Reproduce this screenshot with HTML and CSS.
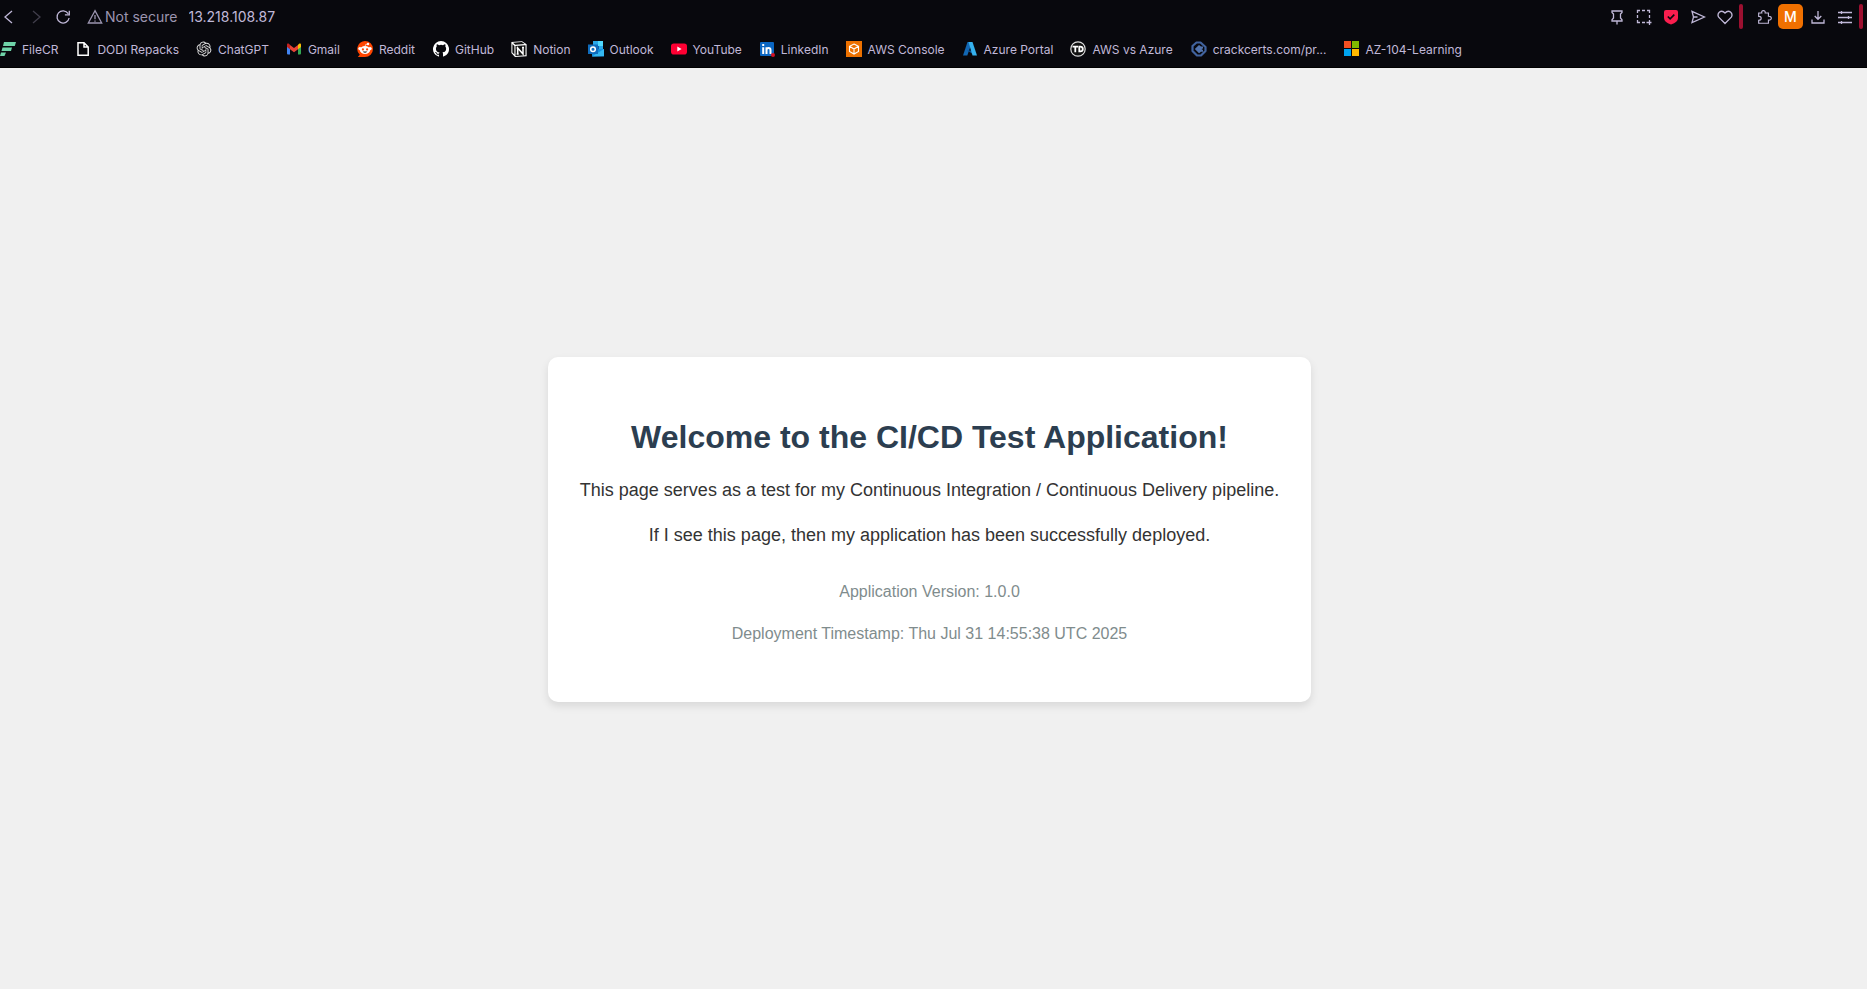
FILE: index.html
```html
<!DOCTYPE html>
<html lang="en">
<head>
<meta charset="utf-8">
<title>CI/CD Test Application</title>
<link rel="stylesheet" href="styles.css">
</head>
<body>
<header class="browser">
  <div class="toolbar">
    <nav class="history" aria-label="History">
      <button class="tool" aria-label="Back"><svg class="glyph" viewBox="0 0 16 16"><path d="M11 2 4 8l7 6"/></svg></button>
      <button class="tool dim" aria-label="Forward"><svg class="glyph" viewBox="0 0 16 16"><path d="m5 2 7 6-7 6"/></svg></button>
      <button class="tool" aria-label="Reload"><svg class="glyph" viewBox="0 0 16 16"><path d="M13.2 4.6A6.1 6.1 0 1 0 14.1 9M14.3 1.7v4.2h-4.4"/></svg></button>
    </nav>
    <button class="security"><svg class="glyph" viewBox="0 0 16 16"><path d="M8 1.7 1.3 14h13.4zM8 6v4.3M8 11.4v1.3"/></svg>Not secure</button>
    <input class="address" aria-label="Address" value="13.218.108.87">
    <div class="actions">
      <button class="tool" aria-label="Pin"><svg class="glyph" viewBox="0 0 16 16"><path d="M3 2h10v1.5L11.5 5v4l1.5 1.700V12H3v-1.300L4.500 9V5L3 3.500zM8 12v3.500"/></svg></button>
      <button class="tool" aria-label="Snapshot"><svg class="glyph" viewBox="0 0 16 16"><path d="M1.500 4V1.500H4M6 1.500h3M11 1.500h2.500V4M13.500 6v3M1.500 6v3M1.500 11v2.500H4M6 13.500h3M10.500 13.500h5M13.500 11v5"/></svg></button>
      <button class="tool" aria-label="Ad blocker"><svg class="glyph" viewBox="0 0 16 16"><path fill="#fa1e4e" stroke="none" d="M1 3q0-2 2-2h10q2 0 2 2v6q0 4-7 6.500Q1 13 1 9z"/><path stroke="#08080d" stroke-width="1.600" d="m4.800 7.500 2.300 2.300 4.200-4.200"/></svg></button>
      <button class="tool" aria-label="Send"><svg class="glyph" viewBox="0 0 16 16"><path d="m2 2.300 12.500 5.700L2 13.700l1.500-5.700zM3.500 8h4"/></svg></button>
      <button class="tool" aria-label="Favorites"><svg class="glyph" viewBox="0 0 16 16"><path d="M8 14.500 1.700 8.200C-.5 4.500 4-.3 8 4c4-4.300 8.500.5 6.300 4.200z"/></svg></button>
    </div>
    <span class="divider"></span>
    <div class="actions extensions">
      <button class="tool" aria-label="Extensions"><svg class="glyph" viewBox="0 0 18 16"><path d="M3 3.500h3.500C5.500-.3 11 0 10.300 3.500H14v3.700c4.300-.5 4.300 4.800 0 4.300V15H3v-3.300c4-.2 3.600-4.500 0-4.400z"/></svg></button>
      <button class="profile" aria-label="Profile M">M</button>
      <button class="tool" aria-label="Downloads"><svg class="glyph" viewBox="0 0 16 16"><path d="M8 2v8M4.700 7 8 10.300 11.300 7M2 10.500V14h12v-3.500"/></svg></button>
      <button class="tool" aria-label="Easy setup"><svg class="glyph" viewBox="0 0 16 16"><path d="M1 3.500h14M1 8.500h14M1 13.500h14M4.500 2v3M11.500 7v3M4.500 12v3"/></svg></button>
    </div>
    <span class="divider"></span>
  </div>
  <nav class="bookmarks" aria-label="Bookmarks">
    <a class="bookmark" href="#"><svg class="favicon" viewBox="0 0 16 16"><path fill="#6fd3a8" d="M4 1h12l-1.200 4H3zM2.500 6.500H12L11 10H1.500zM1 11.500h5L4.500 15H0z"/></svg>FileCR</a>
    <a class="bookmark" href="#"><svg class="favicon" viewBox="0 0 16 16"><path fill="none" stroke="#fff" stroke-width="1.500" d="M3 1.800h6l4.200 4.200v8.200H3zM9 2v4h4"/></svg>DODI Repacks</a>
    <a class="bookmark" href="#"><svg class="favicon" viewBox="-1 -1 26 26"><path fill="#ddd" d="M22.282 9.821a5.985 5.985 0 0 0-.516-4.910 6.046 6.046 0 0 0-6.510-2.900A6.065 6.065 0 0 0 4.981 4.182a5.985 5.985 0 0 0-3.998 2.900 6.046 6.046 0 0 0 .743 7.097 5.980 5.980 0 0 0 .510 4.911 6.051 6.051 0 0 0 6.515 2.900A5.985 5.985 0 0 0 13.260 24a6.056 6.056 0 0 0 5.772-4.206 5.990 5.990 0 0 0 3.998-2.900 6.056 6.056 0 0 0-.748-7.073zM13.260 22.430a4.476 4.476 0 0 1-2.876-1.041l.141-.080 4.779-2.758a.795.795 0 0 0 .393-.682v-6.737l2.020 1.169a.071.071 0 0 1 .038.052v5.583a4.504 4.504 0 0 1-4.495 4.494zM3.600 18.304a4.471 4.471 0 0 1-.535-3.014l.142.085 4.783 2.759a.771.771 0 0 0 .780 0l5.843-3.369v2.332a.080.080 0 0 1-.033.062L9.740 19.950a4.499 4.499 0 0 1-6.140-1.646zM2.341 7.896a4.485 4.485 0 0 1 2.366-1.973V11.600a.766.766 0 0 0 .388.677l5.814 3.354-2.020 1.169a.076.076 0 0 1-.071 0l-4.830-2.787A4.504 4.504 0 0 1 2.341 7.896zm16.596 3.855-5.833-3.387L15.119 7.200a.076.076 0 0 1 .071 0l4.830 2.791a4.494 4.494 0 0 1-.676 8.105v-5.678a.790.790 0 0 0-.407-.667zm2.010-3.023-.141-.085-4.774-2.782a.776.776 0 0 0-.785 0L9.409 9.230V6.897a.066.066 0 0 1 .028-.061l4.830-2.787a4.499 4.499 0 0 1 6.680 4.660zM8.307 12.863l-2.020-1.164a.080.080 0 0 1-.038-.057V6.075a4.499 4.499 0 0 1 7.376-3.454l-.142.081L8.704 5.460a.795.795 0 0 0-.393.681zm1.097-2.366 2.602-1.500 2.607 1.500v2.999l-2.597 1.500-2.607-1.500z"/></svg>ChatGPT</a>
    <a class="bookmark" href="#"><svg class="favicon" viewBox="0 0 16 16"><path fill="#4285f4" d="M1 4v8.500q0 1 1 1h2V7z"/><path fill="#34a853" d="M15 4v8.500q0 1-1 1h-2V7z"/><path fill="#ea4335" d="M4 4v4.200l4 3 4-3V4L8 7z"/><path fill="#c5221f" d="M1 4c0-1.800 1.500-2 3 0v4.200L1 6z"/><path fill="#fbbc04" d="M15 4c0-1.800-1.500-2-3 0v4.200L15 6z"/></svg>Gmail</a>
    <a class="bookmark" href="#"><svg class="favicon" viewBox="0 0 16 16"><path fill="#ff4500" d="M8 0a8 8 0 1 1 0 16H.8l2-2.200A8 8 0 0 1 8 0z"/><circle cx="2.900" cy="7.600" r="1.600" fill="#fff"/><circle cx="13.100" cy="7.600" r="1.600" fill="#fff"/><circle cx="11" cy="3" r="1.200" fill="#fff"/><path fill="none" stroke="#fff" stroke-width=".7" d="M8 5.500q0-2.600 2.500-2.500"/><ellipse cx="8" cy="9" rx="5.200" ry="4" fill="#fff"/><circle cx="5.900" cy="8.400" r="1.100" fill="#ff4500"/><circle cx="10.100" cy="8.400" r="1.100" fill="#ff4500"/><path fill="#222" d="M5.700 10.500h4.600Q8 13 5.700 10.500z"/></svg>Reddit</a>
    <a class="bookmark wide" href="#"><svg class="favicon" viewBox="0 0 16 16"><path fill="#fff" d="M8 0a8 8 0 0 0-2.530 15.590c.4.070.55-.17.55-.38v-1.490c-2.010.37-2.530-.49-2.690-.94-.09-.23-.48-.94-.82-1.130-.28-.15-.68-.52-.01-.53.63-.01 1.080.58 1.230.82.72 1.210 1.870.87 2.330.66.070-.52.280-.87.510-1.070-1.780-.2-3.640-.89-3.640-3.950 0-.87.310-1.590.820-2.150-.080-.2-.360-1.020.080-2.120 0 0 .670-.21 2.200.82a7.600 7.600 0 0 1 4 0c1.530-1.040 2.200-.82 2.200-.82.440 1.100.160 1.920.080 2.120.510.560.820 1.270.820 2.150 0 3.070-1.870 3.750-3.650 3.950.290.250.540.730.540 1.480v2.200c0 .210.150.460.550.380A8 8 0 0 0 8 0z"/></svg>GitHub</a>
    <a class="bookmark" href="#"><svg class="favicon" viewBox="0 0 16 16"><path fill="#fff" d="M.4 1 11 .2l4.600 3v12.100L4 16 .4 12z"/><path fill="#111" d="m2 1.700 8.800-.6 2.800 2L4.300 3.700zM1.400 3l2 2v8.500l-2-2zM4.500 5l10-.7v10L4.500 15z"/><path fill="none" stroke="#fff" stroke-width="1.500" d="M6.700 13V7l5.300 6V6.500M5.700 7h1.500M11 6.500h2M5.700 13h2"/></svg>Notion</a>
    <a class="bookmark" href="#"><svg class="favicon" viewBox="0 0 16 16"><path fill="#28a8ea" d="M5 0h10v9H5z"/><path fill="#50d9ff" d="M10 0h5v5h-5z"/><path fill="#0f5ea8" d="M5 5h6v5H5z"/><path fill="#1490df" d="M4 8.500 16 8v7.500H4z"/><path fill="#35b8f1" d="M16 8v7L4 15.500z"/><path fill="#0f6cbd" d="M0 3.500h10v9.500H0z"/><circle cx="5" cy="8.200" r="2.300" fill="none" stroke="#fff" stroke-width="1.500"/></svg>Outlook</a>
    <a class="bookmark" href="#"><svg class="favicon" viewBox="0 0 16 16"><rect y="2.500" width="16" height="11" rx="2.800" fill="#ff0033"/><path fill="#fff" d="m6.300 5.500 4.300 2.500-4.300 2.500z"/></svg>YouTube</a>
    <a class="bookmark" href="#"><svg class="favicon" viewBox="0 0 16 16"><rect x="1" y="1" width="14" height="14" rx="1" fill="#0a66c2"/><path fill="none" stroke="#fff" stroke-width="2" d="M4.200 6.300V13M4.200 3v2M7.500 6.300V13M7.500 9q0-2 2-2t2 2v4"/><circle cx="14" cy="14" r="2" fill="#d11124"/></svg>LinkedIn</a>
    <a class="bookmark" href="#"><svg class="favicon" viewBox="0 0 16 16"><path fill="#ed7100" d="M0 0h16v16H0z"/><path fill="none" stroke="#fff" stroke-width="1.100" d="m8 3 4.500 2.300v5.200L8 13l-4.500-2.500V5.300zM3.500 5.300 8 8l4.500-2.700M8 8v5"/></svg>AWS Console</a>
    <a class="bookmark" href="#"><svg class="favicon" viewBox="0 0 16 16"><path fill="#1267b4" d="M5.500 1H10L5.300 14.500H1z"/><path fill="#0a4f91" d="M5 9.500h6.500l1 4.500z"/><path fill="#35b1ee" d="M6.500 1h4L15 14.500h-4.500z"/></svg>Azure Portal</a>
    <a class="bookmark" href="#"><svg class="favicon" viewBox="0 0 16 16"><circle cx="8" cy="8" r="7.200" fill="#111" stroke="#ddd" stroke-width="1.200"/><path fill="none" stroke="#fff" stroke-width="1.800" d="M2.500 5.600h5.500M5.300 5.600V11.300M9.300 5.600V10.400h1q2.500 0 2.500-2.400T10.300 5.600z"/></svg>AWS vs Azure</a>
    <a class="bookmark wide" href="#"><svg class="favicon" viewBox="0 0 16 16"><path fill="none" stroke="#41639f" stroke-width="2.200" stroke-linejoin="round" d="M5.500 1.500h4L14.500 6v4L10 14.500H6L1.500 10V5z"/><path fill="#5274ae" d="m8 4 2 1.500h2v2L10.500 8l1.500 1v1.700h-2L8 12.300 3.800 8z"/></svg>crackcerts.com/pr...</a>
    <a class="bookmark" href="#"><svg class="favicon" viewBox="0 0 16 16"><path fill="#f25022" d="M0 0h7v7H0z"/><path fill="#7fba00" d="M8 0h7v7H8z"/><path fill="#00a4ef" d="M0 8h7v7H0z"/><path fill="#ffb900" d="M8 8h7v7H8z"/></svg>AZ-104-Learning</a>
  </nav>
</header>
<main class="page">
  <section class="card">
    <h1 class="title">Welcome to the CI/CD Test Application!</h1>
    <p class="message">This page serves as a test for my Continuous Integration / Continuous Delivery pipeline.</p>
    <p class="message">If I see this page, then my application has been successfully deployed.</p>
    <div class="details">
      <p class="detail">Application Version: 1.0.0</p>
      <p class="detail">Deployment Timestamp: Thu Jul 31 14:55:38 UTC 2025</p>
    </div>
  </section>
</main>
</body>
</html>
```
FILE: styles.css
```css
* {
  box-sizing: border-box;
}

body {
  display: flex;
  flex-direction: column;
  min-height: 100vh;
  margin: 0;
  background: #f0f0f0;
  font-family: "Liberation Sans", Arial, sans-serif;
}

.browser {
  background: #08080d;
  border-bottom: 1px solid #000;
  color: #c0b8d8;
  font-family: Inter, sans-serif;
}

button,
input {
  padding: 0;
  border: 0;
  background: none;
  color: inherit;
  font: inherit;
}

.toolbar {
  display: flex;
  align-items: center;
  height: 33px;
  padding-right: 4px;
  font-size: 14px;
}

.history {
  display: flex;
  margin-left: -5px;
  padding-right: 11px;
}

.tool {
  display: flex;
  align-items: center;
  justify-content: center;
  width: 27px;
  height: 25px;
}

.dim {
  opacity: 0.3;
}

.glyph {
  width: 16px;
  height: 16px;
  fill: none;
  stroke: currentColor;
  stroke-width: 1.3;
}

.security {
  display: flex;
  align-items: center;
  gap: 2px;
  color: #9c95b0;
}

.address {
  flex: 1;
  min-width: 0;
  margin-left: 11px;
  padding-bottom: 1px;
}

.actions {
  display: flex;
  margin-right: 1px;
}

.extensions {
  margin-left: 7px;
}

.divider {
  width: 4px;
  height: 25px;
  border-radius: 2px;
  background: #9c1030;
}

.profile {
  width: 25px;
  height: 25px;
  margin: 0 1px;
  border-radius: 5px;
  background: #f07000;
  color: #fff;
  font-weight: 500;
}

.bookmarks {
  display: flex;
  align-items: center;
  gap: 17px;
  height: 34px;
  padding-bottom: 2px;
  overflow: hidden;
  font-size: 12px;
}

.bookmark {
  display: flex;
  align-items: center;
  gap: 6px;
  color: inherit;
  text-decoration: none;
  white-space: nowrap;
}

.wide {
  margin-left: 1px;
}

.favicon {
  flex: none;
  width: 16px;
  height: 16px;
}

.page {
  display: flex;
  flex: 1;
  align-items: center;
  justify-content: center;
  padding: 2px 8px 0 0;
}

.card {
  padding: 62px 32px 55px;
  border-radius: 10px;
  background: #fff;
  box-shadow: 0 4px 8px rgba(0, 0, 0, 0.1);
  text-align: center;
}

.title {
  margin: 0 0 21px;
  color: #2c3e50;
  font-size: 32px;
  line-height: 36px;
}

.message {
  margin: 0 0 17px;
  color: #333;
  font-size: 18px;
  line-height: 28px;
}

.details {
  margin-top: 30px;
}

.detail {
  margin: 0;
  color: #7f8c8d;
  font-size: 16px;
  line-height: 26px;
}

.detail + .detail {
  margin-top: 16px;
}
```
